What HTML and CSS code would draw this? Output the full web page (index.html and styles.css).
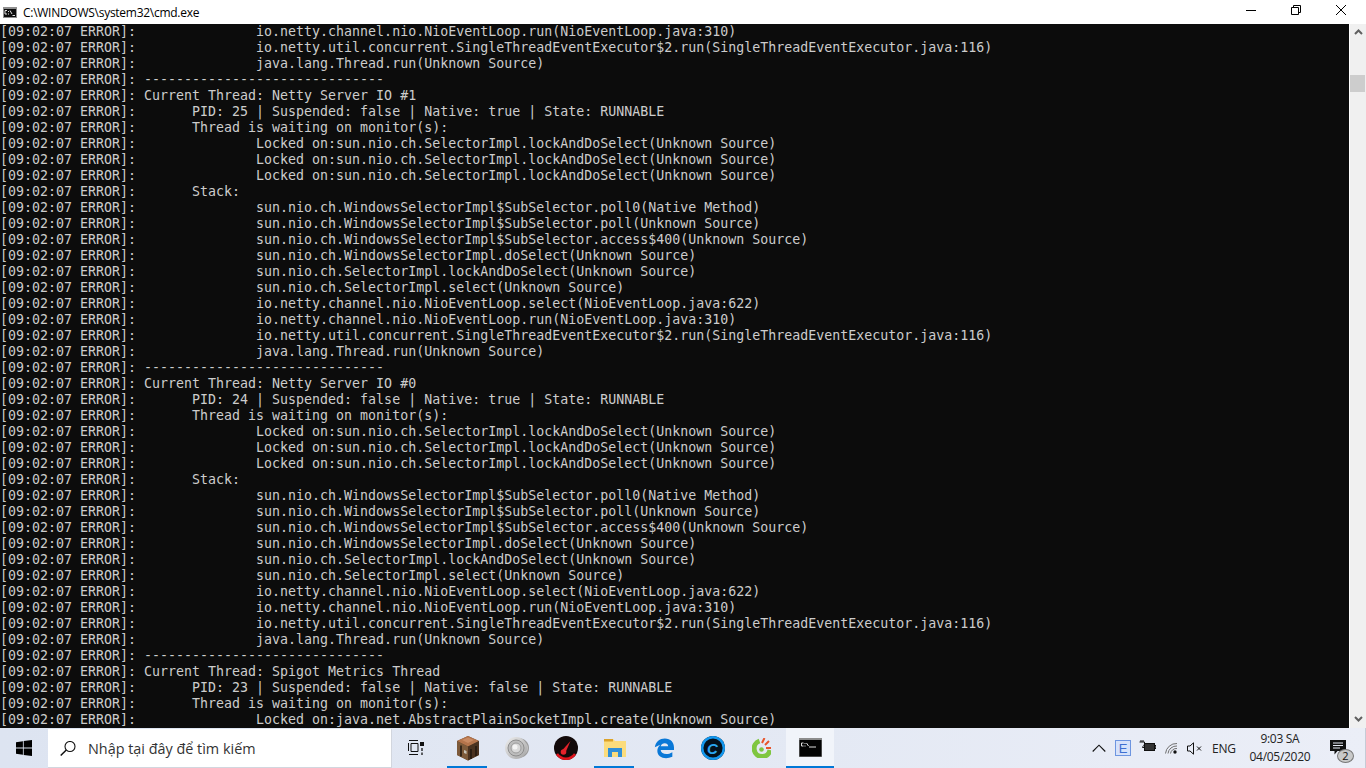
FILE: index.html
```html
<!DOCTYPE html>
<html lang="vi">
<head>
<meta charset="utf-8">
<title>cmd.exe</title>
<link rel="stylesheet" href="styles.css">
</head>
<body>
<div class="window">
<header class="titlebar">
<svg class="app-icon" width="14" height="11" viewBox="0 0 14 11"><rect width="14" height="11" fill="#8f8f8f"/><rect x="1" y="2" width="12" height="8" fill="#0c0c0c"/><path d="M2 3.500h2M2 3.500v3.500h2M5 4.500h1M5 7h1M7 3.500l2 3.500M9.500 8.500h2.500" stroke="#e0e0e0" fill="none"/></svg>
<span class="title">C:\WINDOWS\system32\cmd.exe</span>
<div class="controls">
<svg width="10" height="10" viewBox="0 0 10 10"><path d="M0 5.500h10" stroke="#000"/></svg>
<svg width="10" height="10" viewBox="0 0 10 10"><path d="M2.500 2.500v-2h7v7h-2M.5 2.500h7v7h-7z" stroke="#000" fill="none"/></svg>
<svg width="10" height="10" viewBox="0 0 10 10"><path d="M0 0l10 10M10 0L0 10" stroke="#000" fill="none"/></svg>
</div>
</header>
<div class="console-wrap">
<pre class="console">[09:02:07 ERROR]:               io.netty.channel.nio.NioEventLoop.run(NioEventLoop.java:310)
[09:02:07 ERROR]:               io.netty.util.concurrent.SingleThreadEventExecutor$2.run(SingleThreadEventExecutor.java:116)
[09:02:07 ERROR]:               java.lang.Thread.run(Unknown Source)
[09:02:07 ERROR]: ------------------------------
[09:02:07 ERROR]: Current Thread: Netty Server IO #1
[09:02:07 ERROR]:       PID: 25 | Suspended: false | Native: true | State: RUNNABLE
[09:02:07 ERROR]:       Thread is waiting on monitor(s):
[09:02:07 ERROR]:               Locked on:sun.nio.ch.SelectorImpl.lockAndDoSelect(Unknown Source)
[09:02:07 ERROR]:               Locked on:sun.nio.ch.SelectorImpl.lockAndDoSelect(Unknown Source)
[09:02:07 ERROR]:               Locked on:sun.nio.ch.SelectorImpl.lockAndDoSelect(Unknown Source)
[09:02:07 ERROR]:       Stack:
[09:02:07 ERROR]:               sun.nio.ch.WindowsSelectorImpl$SubSelector.poll0(Native Method)
[09:02:07 ERROR]:               sun.nio.ch.WindowsSelectorImpl$SubSelector.poll(Unknown Source)
[09:02:07 ERROR]:               sun.nio.ch.WindowsSelectorImpl$SubSelector.access$400(Unknown Source)
[09:02:07 ERROR]:               sun.nio.ch.WindowsSelectorImpl.doSelect(Unknown Source)
[09:02:07 ERROR]:               sun.nio.ch.SelectorImpl.lockAndDoSelect(Unknown Source)
[09:02:07 ERROR]:               sun.nio.ch.SelectorImpl.select(Unknown Source)
[09:02:07 ERROR]:               io.netty.channel.nio.NioEventLoop.select(NioEventLoop.java:622)
[09:02:07 ERROR]:               io.netty.channel.nio.NioEventLoop.run(NioEventLoop.java:310)
[09:02:07 ERROR]:               io.netty.util.concurrent.SingleThreadEventExecutor$2.run(SingleThreadEventExecutor.java:116)
[09:02:07 ERROR]:               java.lang.Thread.run(Unknown Source)
[09:02:07 ERROR]: ------------------------------
[09:02:07 ERROR]: Current Thread: Netty Server IO #0
[09:02:07 ERROR]:       PID: 24 | Suspended: false | Native: true | State: RUNNABLE
[09:02:07 ERROR]:       Thread is waiting on monitor(s):
[09:02:07 ERROR]:               Locked on:sun.nio.ch.SelectorImpl.lockAndDoSelect(Unknown Source)
[09:02:07 ERROR]:               Locked on:sun.nio.ch.SelectorImpl.lockAndDoSelect(Unknown Source)
[09:02:07 ERROR]:               Locked on:sun.nio.ch.SelectorImpl.lockAndDoSelect(Unknown Source)
[09:02:07 ERROR]:       Stack:
[09:02:07 ERROR]:               sun.nio.ch.WindowsSelectorImpl$SubSelector.poll0(Native Method)
[09:02:07 ERROR]:               sun.nio.ch.WindowsSelectorImpl$SubSelector.poll(Unknown Source)
[09:02:07 ERROR]:               sun.nio.ch.WindowsSelectorImpl$SubSelector.access$400(Unknown Source)
[09:02:07 ERROR]:               sun.nio.ch.WindowsSelectorImpl.doSelect(Unknown Source)
[09:02:07 ERROR]:               sun.nio.ch.SelectorImpl.lockAndDoSelect(Unknown Source)
[09:02:07 ERROR]:               sun.nio.ch.SelectorImpl.select(Unknown Source)
[09:02:07 ERROR]:               io.netty.channel.nio.NioEventLoop.select(NioEventLoop.java:622)
[09:02:07 ERROR]:               io.netty.channel.nio.NioEventLoop.run(NioEventLoop.java:310)
[09:02:07 ERROR]:               io.netty.util.concurrent.SingleThreadEventExecutor$2.run(SingleThreadEventExecutor.java:116)
[09:02:07 ERROR]:               java.lang.Thread.run(Unknown Source)
[09:02:07 ERROR]: ------------------------------
[09:02:07 ERROR]: Current Thread: Spigot Metrics Thread
[09:02:07 ERROR]:       PID: 23 | Suspended: false | Native: false | State: RUNNABLE
[09:02:07 ERROR]:       Thread is waiting on monitor(s):
[09:02:07 ERROR]:               Locked on:java.net.AbstractPlainSocketImpl.create(Unknown Source)</pre>
<div class="scrollbar">
<svg class="arrow" width="9" height="6" viewBox="0 0 9 6"><path d="M1 5l3.500-3.500L8 5" stroke="#606060" stroke-width="2" fill="none"/></svg>
<div class="thumb"></div>
<svg class="arrow arrow-down" width="9" height="6" viewBox="0 0 9 6"><path d="M1 1l3.500 3.500L8 1" stroke="#606060" stroke-width="2" fill="none"/></svg>
</div>
</div>
<footer class="taskbar">
<div class="start"><svg width="16" height="16" viewBox="0 0 16 16"><path d="M0 2.200l6.900-1v6.400H0zM7.700 1.100L16 0v7.600H7.700zM0 8.400h6.900v6.400L0 13.800zM7.700 8.400H16V16l-8.300-1.100z" fill="#000"/></svg></div>
<div class="search"><svg width="16" height="15" viewBox="0 0 16 15"><circle cx="10" cy="5.500" r="5" stroke="#111" stroke-width="1.100" fill="none"/><path d="M6.300 9L.7 14.500" stroke="#111" stroke-width="1.500"/></svg><span>Nhập tại đây để tìm kiếm</span></div>
<div class="taskview"><svg width="16" height="16" viewBox="0 0 16 16"><path d="M1 .5h9M3 3.500h7v8H3zM1 14.500h9M.5 3v8" stroke="#111" fill="none"/><rect x="12" y="2" width="4" height="4" fill="#111"/><path d="M14 8v7" stroke="#111" stroke-width="1.300" stroke-dasharray="3 1.500"/></svg></div>
<div class="apps">
<div class="app running"><svg width="24" height="26" viewBox="0 0 24 26"><path d="M12 1l11 5v14l-11 5.500L1 20V6z" fill="#6a482d"/><path d="M12 1l11 5-11 5.500L1 6z" fill="#b4744b"/><path d="M6 5l6-2.500L18 5l-6 3z" fill="#c98a62"/><path d="M12 11.500V25.500L23 20V6z" fill="#4a3220"/><path d="M1 6l11 5.500V25.500L1 20z" fill="#7d5a3a"/><path d="M5 10.500v11M15 14v10M20 11v10" stroke="#241a11" stroke-width="1.600"/><path d="M8 15l2.500 1v3L8 18z" fill="#c9c4b8"/></svg></div>
<div class="app"><svg width="24" height="24" viewBox="0 0 24 24"><defs><linearGradient id="spk" x1="0" y1="0" x2="1" y2="1"><stop offset="0" stop-color="#efefef"/><stop offset="1" stop-color="#a3a3a3"/></linearGradient></defs><path d="M13 2c6 0 11 4 11 10s-5 10-11 10z" fill="#9c9c9c"/><path d="M17 4c4 2 6 5 6 8s-2 6-6 8z" fill="#c4c4c4"/><circle cx="11" cy="12" r="11" fill="url(#spk)"/><circle cx="11" cy="12" r="8" fill="#bdbdbd" stroke="#8d8d8d"/><circle cx="11" cy="12" r="5" fill="#d9d9d9" stroke="#9c9c9c"/><circle cx="10" cy="11" r="2.500" fill="#f4f4f4"/></svg></div>
<div class="app"><svg width="24" height="24" viewBox="0 0 24 24"><circle cx="12" cy="12" r="12" fill="#120a0a"/><path d="M3 18a11 11 0 0 0 18 0" stroke="#e0141c" stroke-width="2.500" fill="none"/><path d="M8 14.500L16.500 5l-5 11.500z" fill="#e5222a"/><circle cx="9.500" cy="16" r="2.800" fill="#e5222a"/></svg></div>
<div class="app running"><svg width="22" height="18" viewBox="0 0 22 18"><path d="M0 0h9l2 2h11v16H0z" fill="#fbdc7c"/><path d="M0 0h9v2.500H0z" fill="#dca32a"/><path d="M4 9h14v9H4z" fill="#2f8fd8"/><path d="M8 13h6v5H8z" fill="#fbdc7c"/></svg></div>
<div class="app"><svg width="20" height="22" viewBox="0 0 24 24"><path d="M1 11C2 4 7 .5 13 .5c7 0 11 4.500 11 11v3H8c.5 5 8 6.500 14 2.500v5.500c-9 4-18 .5-18-7 0-3 1-5 3.500-7.500C4.500 9.500 2.500 10 1 11zM8 10h9c0-5-8-5-9 0z" fill="#0a78d7"/></svg></div>
<div class="app"><svg width="24" height="24" viewBox="0 0 24 24"><circle cx="12" cy="12" r="12" fill="#04121d"/><circle cx="12" cy="12" r="10.800" fill="none" stroke="#1397ee" stroke-width="2.400"/><text x="11.500" y="17.500" class="c-letter" text-anchor="middle">C</text></svg></div>
<div class="app"><svg width="19" height="20" viewBox="0 0 19 20"><path d="M7.500 3A8 8 0 1 0 18 12" stroke="#7fc640" stroke-width="5" fill="none"/><circle cx="9.500" cy="11.500" r="2.300" fill="#7fc640"/><path d="M10 5l2.500-5M13 7l4-4M14 10h5" stroke="#e8552b" stroke-width="2"/></svg></div>
<div class="app current"><svg width="23" height="19" viewBox="0 0 23 19"><rect width="23" height="19" fill="#8c8c8c"/><rect x=".5" y="2" width="22" height="16.500" fill="#030303"/><path d="M2.500 5h2M2.500 5v3h2M5.500 5.500h1M5.500 8h1M7.500 5l2 3M10 9h7" stroke="#ddd" fill="none"/></svg></div>
</div>
<div class="tray">
<svg class="chev" width="14" height="8" viewBox="0 0 14 8"><path d="M.7 7.500L7 1.200l6.300 6.300" stroke="#111" stroke-width="1.100" fill="none"/></svg>
<svg class="tray-e" width="16" height="16" viewBox="0 0 16 16"><rect x=".5" y=".5" width="15" height="15" fill="#d6e2fa" stroke="#6d95e0"/><text x="8" y="13" class="e-letter" text-anchor="middle">E</text></svg>
<svg class="tray-batt" width="17" height="12" viewBox="0 0 17 12"><rect x="5.500" y="3.500" width="10" height="7" fill="#333" stroke="#111"/><path d="M16 5.500h1v3h-1zM2 0v2M4 0v2M.5 2h5v2c0 2-2 1.500-2 3.500h2" stroke="#111" fill="none"/></svg>
<svg class="tray-wifi" width="13" height="11" viewBox="0 0 13 11"><path d="M.5 10.500A11 11 0 0 1 12 .5M3 10.500A8.500 8.500 0 0 1 12 3M5.500 10.500A6 6 0 0 1 12 5.500" stroke="#6f6f6f" fill="none"/><circle cx="10" cy="9" r="1.700" fill="#111"/></svg>
<svg class="tray-vol" width="15" height="13" viewBox="0 0 15 13"><path d="M.5 4h2.500L6.500.8v11.400L3 9H.5zM10 4.500l4 4M14 4.500l-4 4" stroke="#111" fill="none"/></svg>
<span class="lang">ENG</span>
<div class="clock"><span>9:03 SA</span><span>04/05/2020</span></div>
<div class="notify"><svg class="notify-icon" width="16" height="15" viewBox="0 0 16 15"><path d="M0 0h16v11H7.500l-3 3.500V11H0z" fill="#111"/><path d="M3 3h10M3 5.500h10M3 8h7" stroke="#e6eaf4"/></svg><span class="badge">2</span></div>
<div class="desktop-edge"></div>
</div>
</footer>
</div>
</body>
</html>
```
FILE: styles.css
```css
* { box-sizing: border-box; }
html, body { margin: 0; padding: 0; width: 1366px; height: 768px; overflow: hidden; }
body { font-family: "Open Sans", "Noto Sans", sans-serif; background: #fff; }
.window { display: flex; flex-direction: column; height: 768px; }
.titlebar { height: 24px; background: #fff; display: flex; align-items: center; padding-left: 3px; flex: none; }
.app-icon { flex: none; }
.title { margin-left: 6px; font-size: 12px; letter-spacing: -0.27px; color: #000; }
.controls { margin-left: auto; display: flex; gap: 35px; padding-right: 20px; align-items: center; padding-bottom: 4px; }
.console-wrap { height: 704px; display: flex; flex: none; background: #0c0c0c; overflow: hidden; }
.console { margin: 0; width: 1349px; background: #0c0c0c; color: #cccccc; font-family: "DejaVu Sans Mono", monospace; font-size: 13.28px; letter-spacing: 0.016px; line-height: 16px; white-space: pre; overflow: hidden; }
.scrollbar { width: 17px; background: #f0f0f0; border-left: 1px solid #fff; display: flex; flex-direction: column; align-items: flex-start; padding-top: 5px; flex: none; }
.arrow { flex: none; margin-left: 4px; }
.thumb { width: 15px; height: 17px; background: #cdcdcd; margin-top: 40px; }
.arrow-down { margin-top: auto; margin-bottom: 6px; }
.taskbar { height: 40px; flex: none; background: linear-gradient(90deg, #dde4f1, #e4e9f4 60%, #ebeef7); display: flex; align-items: stretch; }
.start { width: 48px; display: flex; align-items: center; justify-content: center; }
.search { width: 344px; margin-top: 1px; background: #fff; border: 1px solid #d2d6de; border-top: 0; border-left: 0; display: flex; align-items: center; padding-left: 12px; gap: 12px; font-size: 14.4px; color: #333; }
.taskview { width: 51px; display: flex; align-items: center; justify-content: center; padding-right: 3px; }
.apps { display: flex; }
.app { width: 49px; display: flex; align-items: center; justify-content: center; position: relative; padding-bottom: 1px; }
.app.running::after { content: ""; position: absolute; left: 4px; right: 5px; bottom: 0; height: 2px; background: #0078d7; }
.app.current { width: 48px; background: #f1f4fa; border-bottom: 2px solid #0078d7; padding-bottom: 0; }
.tray { margin-left: auto; width: 274px; display: flex; align-items: center; }
.chev { flex: none; }
.tray-e { flex: none; margin-left: 9px; }
.tray-batt { flex: none; margin-left: 8px; margin-top: -4px; }
.tray-wifi { flex: none; margin-left: 9px; margin-top: 1px; }
.tray-vol { flex: none; margin-left: 9px; }
.lang { font-size: 12px; color: #222; margin-left: 10px; width: 24px; white-space: nowrap; letter-spacing: -0.2px; }
.clock { width: 72px; margin-left: 11px; display: flex; flex-direction: column; align-items: center; font-size: 12px; line-height: 18px; color: #222; letter-spacing: -0.3px; }
.notify { position: relative; margin-left: 17px; width: 24px; height: 40px; }
.notify-icon { position: absolute; left: 0; top: 12px; }
.badge { position: absolute; left: 7px; top: 21px; width: 17px; height: 14px; border-radius: 50%; background: #c9c9c9; border: 1px solid #777; font-size: 11px; line-height: 12px; text-align: center; color: #111; }
.desktop-edge { width: 1px; height: 40px; background: #c6cbd6; margin-left: 13px; }
.c-letter { font: italic bold 15px "Liberation Sans", sans-serif; fill: #2aa6f0; }
.e-letter { font: 13px "Liberation Sans", sans-serif; fill: #3e6fd0; }
```
